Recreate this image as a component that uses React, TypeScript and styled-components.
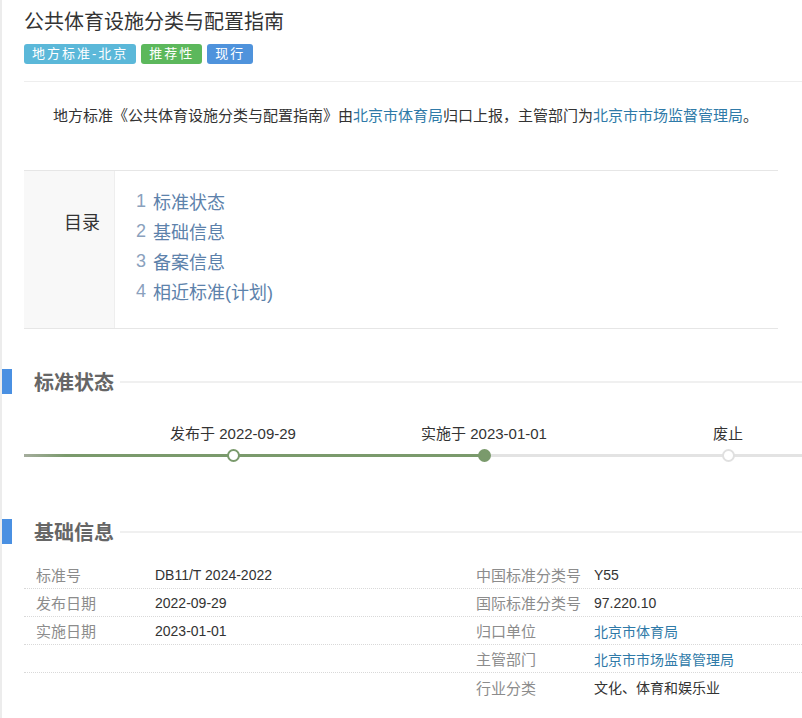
import React from 'react'
import styled, { createGlobalStyle } from 'styled-components'

const GlobalStyle = createGlobalStyle`
    *, *::before, *::after {
        box-sizing: border-box;
    }
    body {
        margin: 0;
        background: #fff;
        font-family: "Liberation Sans", "Noto Sans CJK SC", sans-serif;
        color: #333;
    }
`

const Page = styled.div`
    border-left: 2px solid #ececec;
    min-height: 718px;
    overflow: hidden;
`

const Header = styled.header`
    margin-left: 22px;
    padding: 8px 0 17px;
    border-bottom: 1px solid #eee;
    h1 {
        margin: 0;
        font-size: 20px;
        line-height: 28px;
        font-weight: 400;
        color: #333;
    }
`

const TagRow = styled.div`
    display: flex;
    gap: 5px;
    margin-top: 8px;
`

const tagColors = {
    area: '#5bb8d9',
    kind: '#5cb85c',
    state: '#4f93dc',
}

const Tag = styled.span<{ $kind: keyof typeof tagColors }>`
    height: 20px;
    line-height: 20px;
    padding: 0 8px;
    border-radius: 3px;
    font-size: 13px;
    letter-spacing: 2px;
    color: #fff;
    background: ${(p) => tagColors[p.$kind]};
`

const Summary = styled.p`
    margin: 0 24px 0 22px;
    padding: 22px 0 0 9px;
    text-align: center;
    font-size: 15px;
    line-height: 24px;
    color: #333;
`

const Link = styled.a`
    color: #2f7aa8;
    text-decoration: none;
`

const Toc = styled.div`
    display: flex;
    margin: 42px 24px 0 22px;
    border-top: 1px solid #e6e6e6;
    border-bottom: 1px solid #e6e6e6;
    .toc-title {
        width: 91px;
        padding: 37px 14px 0 0;
        background: #f8f8f8;
        border-right: 1px solid #eee;
        text-align: right;
        font-size: 18px;
        line-height: 30px;
        color: #333;
    }
    ul {
        list-style: none;
        margin: 0;
        padding: 15px 0 22px 21px;
    }
    li {
        display: flex;
        align-items: center;
        height: 30px;
        font-size: 18px;
        color: #5d82ab;
        span {
            color: #8aa1bd;
            margin-right: 7px;
        }
    }
`

const SectionHead = styled.div<{ $top: number }>`
    display: flex;
    align-items: center;
    height: 25px;
    margin-top: ${(p) => p.$top}px;
    .bar {
        width: 12px;
        height: 25px;
        margin-left: -2px;
        background: #4a90e2;
    }
    h2 {
        margin: 0 0 0 22px;
        font-size: 20px;
        font-weight: 700;
        color: #666;
    }
    .line {
        flex: 1;
        height: 2px;
        margin-left: 6px;
        background: #f0f0f0;
    }
`

const steps = '106px 250px 252px 236px'

const StepLabels = styled.div`
    display: grid;
    grid-template-columns: ${steps};
    margin-top: 30px;
    font-size: 15px;
    line-height: 20px;
    color: #333;
    span {
        text-align: center;
        white-space: nowrap;
    }
`

const StepTrack = styled.div`
    display: grid;
    grid-template-columns: ${steps};
    align-items: center;
    height: 22px;
    background: linear-gradient(to right, transparent 22px, #a5ad9d 22px, #7a9a6c 64px, #7a9a6c 482px, #e3e3e3 482px) center / 100% 3px no-repeat;
`

const dotStyles = {
    done: { fill: '#fff', ring: '#7a9a6c' },
    current: { fill: '#7a9a6c', ring: '#7a9a6c' },
    todo: { fill: '#fff', ring: '#e0e0e0' },
}

const Dot = styled.span<{ $state: keyof typeof dotStyles }>`
    justify-self: center;
    width: 13px;
    height: 13px;
    border-radius: 50%;
    border: 2px solid ${(p) => dotStyles[p.$state].ring};
    background: ${(p) => dotStyles[p.$state].fill};
`

const InfoTable = styled.div`
    margin: 17px 0 0 22px;
`

const InfoRow = styled.div<{ $last?: boolean }>`
    display: grid;
    grid-template-columns: 119px 321px 118px 1fr;
    height: 28px;
    align-items: center;
    border-bottom: ${(p) => (p.$last ? 'none' : '1px dotted #d9d9d9')};
    .label {
        padding-left: 12px;
        font-size: 15px;
        color: #8c8c8c;
    }
    .value {
        padding-left: 12px;
        font-size: 14px;
        color: #333;
    }
`

type Cell = { text: string; link?: boolean }

const info: [string, Cell, string, Cell][] = [
    ['标准号', { text: 'DB11/T 2024-2022' }, '中国标准分类号', { text: 'Y55' }],
    ['发布日期', { text: '2022-09-29' }, '国际标准分类号', { text: '97.220.10' }],
    ['实施日期', { text: '2023-01-01' }, '归口单位', { text: '北京市体育局', link: true }],
    ['', { text: '' }, '主管部门', { text: '北京市市场监督管理局', link: true }],
    ['', { text: '' }, '行业分类', { text: '文化、体育和娱乐业' }],
]

const renderValue = (cell: Cell) => (
    <span className='value'>{cell.link ? <Link href='#'>{cell.text}</Link> : cell.text}</span>
)

const App = () => {
    const toc = ['标准状态', '基础信息', '备案信息', '相近标准(计划)']
    return (
        <Page>
            <GlobalStyle />
            <Header>
                <h1>公共体育设施分类与配置指南</h1>
                <TagRow>
                    <Tag $kind='area'>地方标准-北京</Tag>
                    <Tag $kind='kind'>推荐性</Tag>
                    <Tag $kind='state'>现行</Tag>
                </TagRow>
            </Header>

            <Summary>
                地方标准《公共体育设施分类与配置指南》由<Link href='#'>北京市体育局</Link>归口上报，主管部门为<Link href='#'>北京市市场监督管理局</Link>。
            </Summary>

            <Toc>
                <div className='toc-title'>目录</div>
                <ul>
                    {toc.map((item, i) => (
                        <li key={item}>
                            <span>{i + 1}</span>
                            {item}
                        </li>
                    ))}
                </ul>
            </Toc>

            <SectionHead $top={40}>
                <div className='bar' />
                <h2>标准状态</h2>
                <div className='line' />
            </SectionHead>
            <StepLabels>
                <span />
                <span>发布于 2022-09-29</span>
                <span>实施于 2023-01-01</span>
                <span>废止</span>
            </StepLabels>
            <StepTrack>
                <span />
                <Dot $state='done' />
                <Dot $state='current' />
                <Dot $state='todo' />
            </StepTrack>

            <SectionHead $top={53}>
                <div className='bar' />
                <h2>基础信息</h2>
                <div className='line' />
            </SectionHead>
            <InfoTable>
                {info.map((row, i) => (
                    <InfoRow key={i} $last={i === info.length - 1}>
                        <span className='label'>{row[0]}</span>
                        {renderValue(row[1])}
                        <span className='label'>{row[2]}</span>
                        {renderValue(row[3])}
                    </InfoRow>
                ))}
            </InfoTable>
        </Page>
    )
}

export default App
